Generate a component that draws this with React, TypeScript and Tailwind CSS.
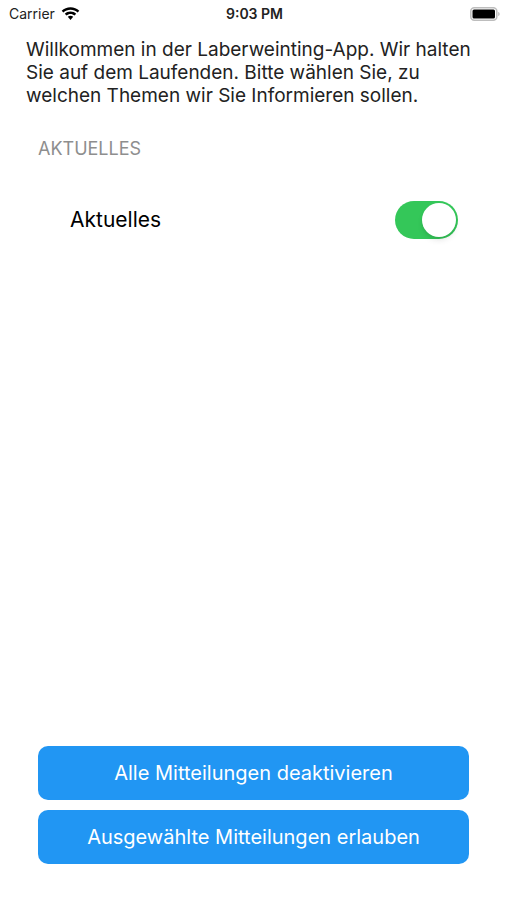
import { useState } from "react";

function WifiIcon() {
  return (
    <svg width="19" height="14" viewBox="0 0 18 14" aria-hidden="true">
      <path d="M9 0.2C5.6 0.2 2.5 1.5 0.2 3.700L1.900 5.500C3.800 3.800 6.300 2.800 9 2.800s5.200 1 7.100 2.700L17.800 3.700C15.500 1.500 12.400 0.200 9 0.200z" />
      <path d="M9 4.500c-2.200 0-4.200.8-5.700 2.300L5 8.600c1.100-1 2.500-1.600 4-1.600s2.900.6 4 1.600L14.700 6.800C13.200 5.300 11.200 4.500 9 4.500z" />
      <path d="M9 8.700c-1 0-2 .4-2.700 1.100L9 12.900l2.700-3.100C11 9.100 10 8.700 9 8.700z" />
    </svg>
  );
}

function BatteryIcon() {
  return (
    <svg width="30" height="14" viewBox="0 0 30 14" aria-hidden="true">
      <rect x="0.800" y="0.800" width="26" height="12.400" rx="3.500" fill="#fff" stroke="#bdbdbd" strokeWidth="1.500" />
      <rect x="2.500" y="2.500" width="22.500" height="9" rx="1.500" />
      <path d="M28.200 4.900v4.200c.9-.4 1.500-1.200 1.500-2.100S29.100 5.300 28.200 4.900z" fill="#bdbdbd" />
    </svg>
  );
}

export default function App() {
  const [enabled, setEnabled] = useState(true);
  return (
    <div className="flex min-h-screen flex-col bg-white font-['Inter',sans-serif] text-black">
      <header className="grid h-7 grid-cols-3 items-center pr-[7px] pl-[9px]">
        <div className="flex items-center gap-1.5 text-sm text-[#222]">
          Carrier <WifiIcon />
        </div>
        <time className="text-center text-sm font-semibold text-[#222]">9:03 PM</time>
        <div className="flex justify-end">
          <BatteryIcon />
        </div>
      </header>
      <main className="flex grow flex-col">
        <p className="mt-[10px] px-[26px] text-[19px] leading-[23px] text-[#222]">
          Willkommen in der Laberweinting-App. Wir halten Sie auf dem Laufenden. Bitte wählen Sie, zu welchen Themen wir Sie Informieren sollen.
        </p>
        <section className="mt-[30px] px-[38px]">
          <h2 className="text-lg leading-6 text-[#8e8e8e]">AKTUELLES</h2>
          <label className="mt-10 flex items-center justify-between pr-[11px] pl-8 text-[21px]">
            Aktuelles
            <input
              type="checkbox"
              role="switch"
              checked={enabled}
              onChange={(e) => setEnabled(e.target.checked)}
              className="h-[38px] w-[63px] appearance-none rounded-full bg-[#d8d8dc] p-[2px] before:block before:size-[34px] before:rounded-full before:bg-white before:shadow-md checked:bg-[#34c759] checked:before:ml-auto"
            />
          </label>
        </section>
        <div className="mt-auto flex flex-col gap-[10px] px-[38px] pb-9">
          <button type="button" className="h-[54px] rounded-[10px] bg-[#2196f3] text-xl text-white">Alle Mitteilungen deaktivieren</button>
          <button type="button" className="h-[54px] rounded-[10px] bg-[#2196f3] text-xl text-white">Ausgewählte Mitteilungen erlauben</button>
        </div>
      </main>
    </div>
  );
}
